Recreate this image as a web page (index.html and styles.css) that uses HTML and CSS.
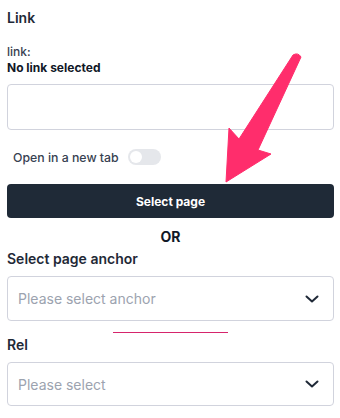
FILE: index.html
```html
<!DOCTYPE html>
<html lang="en">
<head>
    <meta charset="UTF-8">
    <meta name="viewport" content="width=device-width, initial-scale=1.0">
    <title>Link settings</title>
    <link rel="stylesheet" href="styles.css">
</head>
<body>
    <div class="panel">
        <h3 class="title">Link</h3>

        <div class="link-label">link:</div>
        <div class="link-value">No link selected</div>
        <input type="text" class="text-input">

        <label class="toggle-row">
            <span>Open in a new tab</span>
            <span class="toggle"><span class="knob"></span></span>
        </label>

        <button class="primary-btn">Select page</button>

        <div class="or">OR</div>

        <h3 class="field-title">Select page anchor</h3>
        <div class="select">
            <span class="placeholder">Please select anchor</span>
            <svg class="chevron" width="14" height="8" viewBox="0 0 14 8"><path d="M1.5 1.5 L7 6.5 L12.5 1.5" fill="none" stroke="#1f2937" stroke-width="2" stroke-linecap="round" stroke-linejoin="round"/></svg>
        </div>

        <div class="pink-line"></div>

        <h3 class="field-title rel">Rel</h3>
        <div class="select small">
            <span class="placeholder">Please select</span>
            <svg class="chevron" width="14" height="8" viewBox="0 0 14 8"><path d="M1.5 1.5 L7 6.5 L12.5 1.5" fill="none" stroke="#1f2937" stroke-width="2" stroke-linecap="round" stroke-linejoin="round"/></svg>
        </div>
    </div>

    <!-- annotation arrow drawn over the form -->
    <svg class="arrow" width="340" height="418" viewBox="0 0 340 418">
        <path d="M293 55 Q298 52 301 57 L258 150 L271 154 L226 182 L229 128 L239 139 Z" fill="#ff2d6c" stroke="#ff2d6c" stroke-width="1" stroke-linejoin="round"/>
    </svg>
</body>
</html>
```

FILE: styles.css
```css
body {
    margin: 0;
    background: #ffffff;
    font-family: Inter, "Noto Sans", sans-serif;
    color: #1f2937;
}
.panel {
    padding: 9px 6px 0 7px;
    display: flex;
    flex-direction: column;
}
.title {
    margin: 0;
    font-size: 14px;
    line-height: 17px;
    font-weight: 600;
}
.link-label {
    margin-top: 18px;
    font-size: 12px;
    line-height: 15px;
    font-weight: 500;
    color: #374151;
}
.link-value {
    margin-top: 1px;
    font-size: 12px;
    line-height: 15px;
    font-weight: 700;
    color: #111827;
}
.text-input {
    margin: 9px 0 0;
    height: 46px;
    box-sizing: border-box;
    border: 1px solid #d1d3dd;
    border-radius: 4px;
    background: #fff;
}
.toggle-row {
    margin-top: 19px;
    padding-left: 6px;
    display: flex;
    align-items: center;
    gap: 9px;
    height: 16px;
    font-size: 12.3px;
    font-weight: 500;
    color: #374151;
}
.toggle {
    width: 33px;
    height: 16px;
    border-radius: 8px;
    background: #e5e7eb;
    display: flex;
    align-items: center;
    padding-left: 2px;
    box-sizing: border-box;
}
.knob {
    width: 12px;
    height: 12px;
    border-radius: 50%;
    background: #fff;
}
.primary-btn {
    margin-top: 19px;
    height: 34px;
    border: none;
    border-radius: 4px;
    background: #1f2a37;
    color: #fff;
    font-family: inherit;
    font-size: 12px;
    font-weight: 700;
}
.or {
    margin-top: 10px;
    text-align: center;
    font-size: 14px;
    line-height: 17px;
    font-weight: 700;
    color: #111827;
}
.field-title {
    margin: 5px 0 0;
    font-size: 14px;
    line-height: 17px;
    font-weight: 600;
}
.field-title.rel {
    margin-top: 3px;
}
.select {
    margin-top: 9px;
    height: 45px;
    box-sizing: border-box;
    border: 1px solid #d1d3dd;
    border-radius: 4px;
    padding: 0 14px 0 10px;
    display: flex;
    align-items: center;
    justify-content: space-between;
}
.select.small {
    height: 44px;
}
.placeholder {
    font-size: 14px;
    color: #9ca3af;
}
.pink-line {
    margin: 11px 0 0 106px;
    width: 115px;
    height: 1px;
    background: #d6246c;
}
.arrow {
    position: absolute;
    left: 0;
    top: 0;
    pointer-events: none;
}
```
